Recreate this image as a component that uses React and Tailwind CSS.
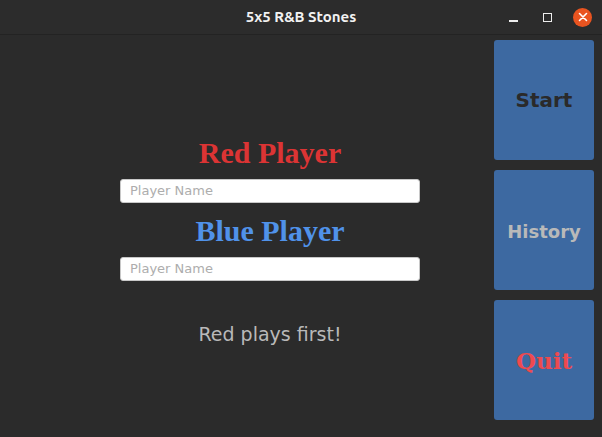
import React from "react";

const sans = { fontFamily: '"DejaVu Sans", sans-serif' };

export default function App() {
  return (
    <div className="w-[602px] h-[437px] flex flex-col bg-[#2b2b2b] overflow-hidden">
      {/* Title bar */}
      <div className="relative h-[35px] flex items-center justify-center bg-[#2c2c2c] border-b border-[#232323] shrink-0">
        <span className="text-[15px] font-bold text-[#f2f2f2] font-['Ubuntu','DejaVu_Sans',sans-serif]">5x5 R&amp;B Stones</span>
        <div className="absolute right-[10px] top-0 h-[34px] flex items-center">
          <div className="w-[9px] h-[1.5px] bg-[#eeeeee] mt-[8px] mr-[25px]" />
          <div className="w-[9px] h-[9px] border-[1.5px] border-[#eeeeee] mr-[21px]" />
          <div className="w-[19px] h-[19px] rounded-full bg-[#e95420] flex items-center justify-center">
            <svg width="10" height="10" viewBox="0 0 10 10">
              <path d="M1.5 1.5 L8.5 8.5 M8.5 1.5 L1.5 8.5" stroke="#fff" strokeWidth="1.6" strokeLinecap="round" />
            </svg>
          </div>
        </div>
      </div>

      <div className="flex flex-1 min-h-0">
        {/* Left: player setup */}
        <div className="flex-1 flex flex-col items-center pt-[100px] pl-[46px]">
          <div className="text-[30px] leading-[36px] font-bold text-[#dc3434] font-['Liberation_Serif',serif]">Red Player</div>
          <div className="w-[300px] h-[24px] mt-[8px] bg-white rounded-[3px] border border-[#c8c8c8] flex items-center px-[9px]">
            <span className="text-[13px] text-[#adadad]" style={sans}>Player Name</span>
          </div>
          <div className="text-[30px] leading-[36px] font-bold text-[#5092e9] mt-[10px] font-['Liberation_Serif',serif]">Blue Player</div>
          <div className="w-[300px] h-[24px] mt-[8px] bg-white rounded-[3px] border border-[#c8c8c8] flex items-center px-[9px]">
            <span className="text-[13px] text-[#adadad]" style={sans}>Player Name</span>
          </div>
          <div className="mt-[39px] text-[19px] text-[#b9b9b9]" style={sans}>Red plays first!</div>
        </div>

        {/* Right: buttons */}
        <div className="w-[100px] mr-[8px] flex flex-col gap-[10px] pt-[5px] pb-[17px]">
          <div className="flex-1 rounded-[3px] bg-[#3d69a1] flex items-center justify-center">
            <span className="text-[20px] font-bold text-[#2a2a2a]" style={sans}>Start</span>
          </div>
          <div className="flex-1 rounded-[3px] bg-[#3d69a1] flex items-center justify-center">
            <span className="text-[18px] font-bold text-[#b9b9b9] mt-[2px]" style={sans}>History</span>
          </div>
          <div className="flex-1 rounded-[3px] bg-[#3d69a1] flex items-center justify-center">
            <span className="text-[23px] font-bold text-[#ef4a4f] mt-[2px] font-['DejaVu_Serif',serif]">Quit</span>
          </div>
        </div>
      </div>
    </div>
  );
}
